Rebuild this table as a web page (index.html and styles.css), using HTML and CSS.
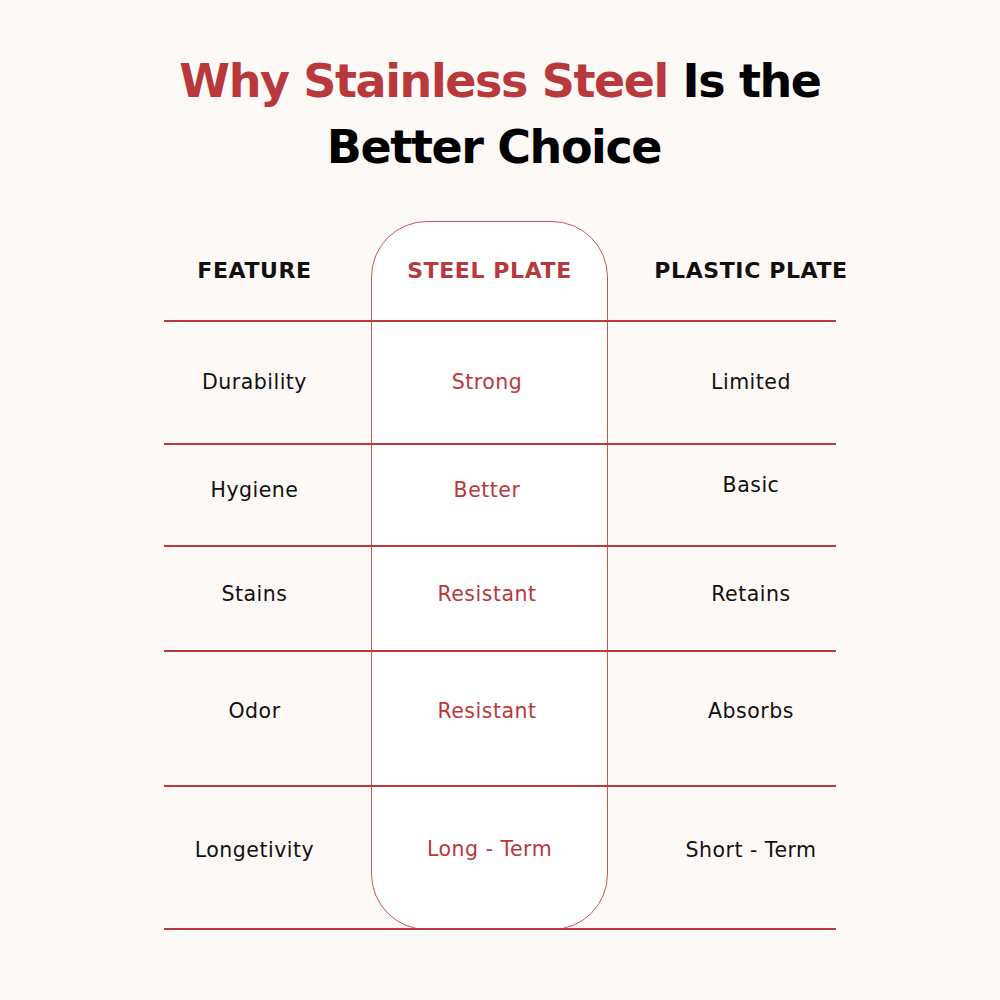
FILE: index.html
```html
<!DOCTYPE html>
<html>
<head>
<meta charset="utf-8">
<link rel="stylesheet" href="styles.css">
</head>
<body>
<main class="page">
  <h1 class="title"><span class="accent">Why Stainless Steel</span> Is the<br><span class="line2">Better Choice</span></h1>
  <div class="table">
    <div class="pill"></div>
    <div class="cell head r1 c1">FEATURE</div>
    <div class="cell head r1 c2 accent">STEEL PLATE</div>
    <div class="cell head r1 c3">PLASTIC PLATE</div>

    <div class="cell r2 c1">Durability</div>
    <div class="cell r2 c2 accent">Strong</div>
    <div class="cell r2 c3">Limited</div>

    <div class="cell r3 c1">Hygiene</div>
    <div class="cell r3 c2 accent">Better</div>
    <div class="cell r3 c3 up">Basic</div>

    <div class="cell r4 c1">Stains</div>
    <div class="cell r4 c2 accent">Resistant</div>
    <div class="cell r4 c3">Retains</div>

    <div class="cell r5 c1">Odor</div>
    <div class="cell r5 c2 accent">Resistant</div>
    <div class="cell r5 c3">Absorbs</div>

    <div class="cell r6 c1">Longetivity</div>
    <div class="cell r6 c2 accent">Long - Term</div>
    <div class="cell r6 c3">Short - Term</div>
  </div>
</main>
</body>
</html>
```
FILE: styles.css
```css
* { box-sizing: border-box; }
html, body { margin: 0; padding: 0; }
body {
  background: #fdf9f6;
  font-family: "DejaVu Sans", sans-serif;
  color: #111;
  width: 1000px;
  height: 1000px;
  overflow: hidden;
}
.page {
  padding-top: 48px;
}
.accent { color: #b8383b; }
.title {
  margin: 0;
  text-align: center;
  font-size: 46px;
  line-height: 66px;
  font-weight: bold;
  color: #000;
  letter-spacing: -1.4px;
}
.line2 { padding-right: 12px; }
.table {
  width: 672px;
  margin: 41px auto 0;
  display: grid;
  grid-template-columns: 207px 237px 228px;
  grid-template-rows: 101px 123px 102px 105px 135px 143px;
}
.pill {
  grid-column: 2;
  grid-row: 1 / -1;
  background: #fff;
  border: 1px solid #c7585a;
  border-radius: 56px;
}
.r1 { grid-row: 1; }
.r2 { grid-row: 2; }
.r3 { grid-row: 3; }
.r4 { grid-row: 4; }
.r5 { grid-row: 5; }
.r6 { grid-row: 6; }
.cell {
  display: flex;
  align-items: center;
  justify-content: center;
  white-space: nowrap;
  border-bottom: 2px solid #b9393c;
  font-size: 20.5px;
  letter-spacing: 0.5px;
  padding-bottom: 10px;
}
.c1 { grid-column: 1; padding-right: 26px; }
.c2 { grid-column: 2; padding-right: 5px; }
.c3 { grid-column: 3; padding-left: 58px; }
.head {
  font-weight: bold;
  font-size: 22px;
  letter-spacing: 0.6px;
  padding-bottom: 0;
}
.head.c2 { padding-right: 0; }
.r2 { padding-bottom: 2px; }
.r3.up { padding-bottom: 20px; }
.r5, .r6 { padding-bottom: 16px; }
.r6.c2 { padding-bottom: 18px; padding-right: 0; }
```
